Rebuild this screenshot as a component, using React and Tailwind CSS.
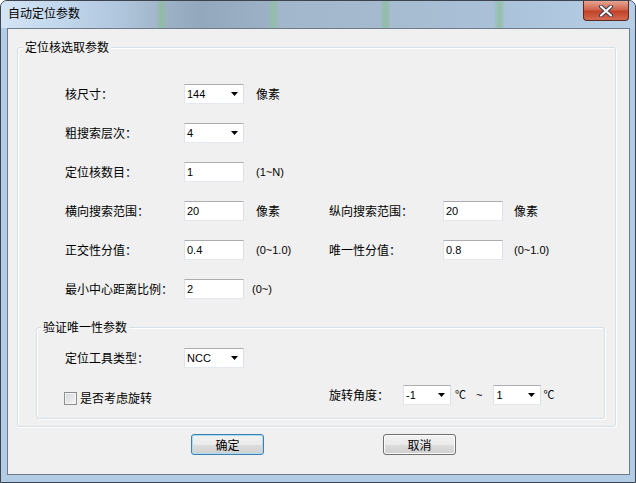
import React from 'react';

const latin = "font-['Tahoma','Liberation_Sans','Noto_Sans_CJK_SC',sans-serif] text-[11px]";

const Arrow = () => (
  <svg width="7" height="4" viewBox="0 0 7 4" className="shrink-0">
    <polygon points="0,0 7,0 3.5,4" fill="#000" />
  </svg>
);

// white box with the win7 textbox border
const Field = ({ value, combo = false, w = 'w-[60px]' }) => (
  <div
    className={`${w} h-[20px] shrink-0 flex items-center justify-between bg-white border border-[#abadb3] border-l-[#e2e3ea] border-r-[#dbdfe6] border-b-[#e3e9ef] pl-[2px] pr-[5px] ${latin} text-[#000]`}
  >
    <span className="leading-[14px]">{value}</span>
    {combo && <Arrow />}
  </div>
);

const Label = ({ children, w }) => (
  <div className={`${w} shrink-0 leading-[16px]`}>{children}</div>
);

const Note = ({ children, cjk = false, ml = 'ml-[12px]' }) => (
  <div className={`${ml} leading-[16px] ${cjk ? '' : latin}`}>{children}</div>
);

const GroupBox = ({ title, className, titleLeft, children }) => (
  <div
    className={`relative border border-[#d5dfe5] rounded-[3px] shadow-[inset_1px_1px_0_#ffffff,1px_1px_0_#ffffff] ${className}`}
  >
    <div className={`absolute top-[-9px] ${titleLeft} px-[2px] bg-[#f0f0f0] leading-[16px]`}>{title}</div>
    {children}
  </div>
);

const Button = ({ children, primary }) => (
  <button
    className={`w-[73px] h-[21px] rounded-[3px] border text-[12px] leading-[16px] bg-[linear-gradient(to_bottom,#f2f2f2_0%,#ebebeb_50%,#dddddd_51%,#cfcfcf_100%)] ${
      primary
        ? 'border-[#3c7fb1] shadow-[inset_0_0_0_1px_#a9ddf6]'
        : 'border-[#707070] shadow-[inset_0_0_0_1px_#fbfbfb]'
    }`}
  >
    {children}
  </button>
);

// aero glass behind the caption, with the blurred desktop showing through
const titleGlass =
  'bg-[linear-gradient(90deg,#d3e4f5_0px,#c2d7ec_60px,#b0c6dc_120px,#a2b7cb_155px,#94b9a9_159px,#94b9a9_162px,#9db1c5_166px,#93a8bd_200px,#9cb1c6_267px,#95bcac_271px,#95bcac_274px,#a2b7cb_278px,#a5baCF_379px,#93bcaa_383px,#93bcaa_386px,#a6bcd1_390px,#a9c0d6_493px,#96c0ad_497px,#96c0ad_500px,#abc3da_504px,#b6cee6_634px)]';

export default function App() {
  return (
    <div className="w-[636px] h-[483px] font-['Noto_Sans_CJK_SC','Microsoft_YaHei',sans-serif] text-[12px] text-black">
      <div className="w-full h-full flex flex-col rounded-t-[7px] border border-[#3d4450] bg-[#b2cce6] overflow-hidden">
        {/* title bar */}
        <div className={`h-[27px] shrink-0 flex justify-between ${titleGlass}`}>
          <div className="pl-[7px] pt-[4px] leading-[16px] text-[12px] text-black">自动定位参数</div>
          <div className="mr-[6px] w-[46px] h-[20px] rounded-b-[4px] border border-t-0 border-[#5a2a22] bg-[linear-gradient(to_bottom,#e8a593_0%,#d0644c_45%,#c2422a_55%,#d36a4f_100%)] flex items-center justify-center">
            <svg width="16" height="12" viewBox="0 0 16 12">
              <path d="M3 1.5 L13 10.5 M13 1.5 L3 10.5" stroke="#3d3d52" strokeWidth="4" strokeLinecap="round" />
              <path d="M3 1.5 L13 10.5 M13 1.5 L3 10.5" stroke="#ffffff" strokeWidth="2" strokeLinecap="round" />
            </svg>
          </div>
        </div>

        {/* client area */}
        <div className="ml-[6px] w-[623px] h-[447px] border border-[#6c7a89] bg-[#f0f0f0]">
          <GroupBox title="定位核选取参数" titleLeft="left-[5px]" className="mt-[18px] ml-[9px] w-[599px] h-[380px]">
            <div className="pt-[36px] pl-[47px] flex flex-col gap-[19px]">
              <div className="flex items-center h-[20px]">
                <Label w="w-[119px]">核尺寸：</Label>
                <Field value="144" combo />
                <Note cjk>像素</Note>
              </div>
              <div className="flex items-center h-[20px]">
                <Label w="w-[119px]">粗搜索层次：</Label>
                <Field value="4" combo />
              </div>
              <div className="flex items-center h-[20px]">
                <Label w="w-[119px]">定位核数目：</Label>
                <Field value="1" />
                <Note>(1~N)</Note>
              </div>
              <div className="flex items-center h-[20px]">
                <div className="w-[264px] shrink-0 flex items-center">
                  <Label w="w-[119px]">横向搜索范围：</Label>
                  <Field value="20" />
                  <Note cjk>像素</Note>
                </div>
                <Label w="w-[114px]">纵向搜索范围：</Label>
                <Field value="20" />
                <Note cjk ml="ml-[11px]">像素</Note>
              </div>
              <div className="flex items-center h-[20px]">
                <div className="w-[264px] shrink-0 flex items-center">
                  <Label w="w-[119px]">正交性分值：</Label>
                  <Field value="0.4" />
                  <Note>(0~1.0)</Note>
                </div>
                <Label w="w-[114px]">唯一性分值：</Label>
                <Field value="0.8" />
                <Note ml="ml-[11px]">(0~1.0)</Note>
              </div>
              <div className="flex items-center h-[20px]">
                <Label w="w-[119px]">最小中心距离比例：</Label>
                <Field value="2" />
                <Note ml="ml-[8px]">(0~)</Note>
              </div>
            </div>

            <GroupBox title="验证唯一性参数" titleLeft="left-[4px]" className="mt-[28px] ml-[18px] w-[569px] h-[92px]">
              <div className="pt-[20px] pl-[28px] flex flex-col gap-[17px]">
                <div className="flex items-center h-[20px]">
                  <Label w="w-[119px]">定位工具类型：</Label>
                  <Field value="NCC" combo />
                </div>
                <div className="flex items-center h-[20px]">
                  <div className="w-[265px] -ml-[1px] mt-[6px] shrink-0 flex items-center gap-[3px]">
                    <div className="w-[13px] h-[13px] border border-[#8f8f8f] bg-[linear-gradient(135deg,#d4d6da_0%,#f7f7f7_100%)] shadow-[inset_0_0_0_1px_#f4f4f4]" />
                    <span className="leading-[16px]">是否考虑旋转</span>
                  </div>
                  <Label w="w-[74px]">旋转角度：</Label>
                  <Field value="-1" combo w="w-[48px]" />
                  <Note ml="ml-[4px]">℃</Note>
                  <Note ml="ml-[10px]">~</Note>
                  <div className="ml-[11px]">
                    <Field value="1" combo w="w-[48px]" />
                  </div>
                  <Note ml="ml-[2px]">℃</Note>
                </div>
              </div>
            </GroupBox>
          </GroupBox>

          <div className="mt-[7px] pl-[183px] flex gap-[119px]">
            <Button primary>确定</Button>
            <Button>取消</Button>
          </div>
        </div>
      </div>
    </div>
  );
}
